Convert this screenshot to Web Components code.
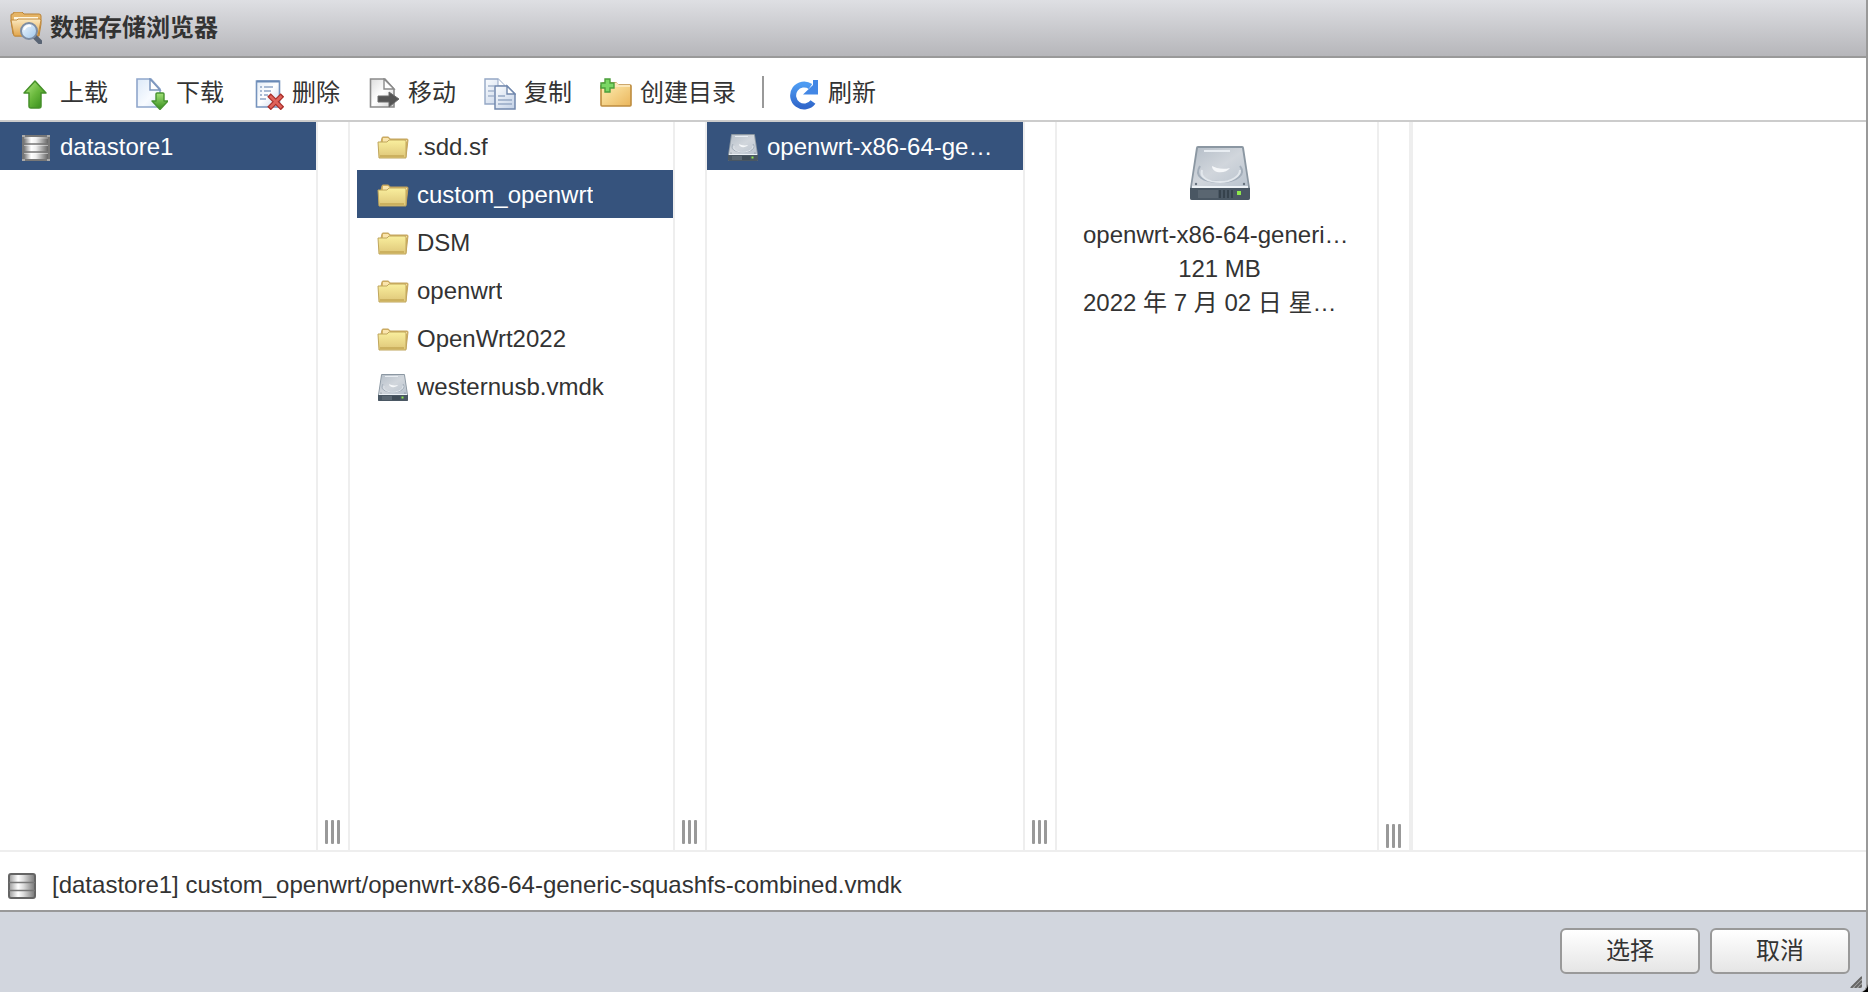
<!DOCTYPE html>
<html lang="zh-CN">
<head>
<meta charset="utf-8">
<title>数据存储浏览器</title>
<style>
  html, body { height: 100%; margin: 0; }
  body { background: #000; color: #333; font: 24px/32px "Liberation Sans", "Noto Sans CJK SC", sans-serif; }
</style>
</head>
<body>
<datastore-dialog>
  <span slot="title">数据存储浏览器</span>
  <tool-button slot="tools" icon="upload">上载</tool-button>
  <tool-button slot="tools" icon="download">下载</tool-button>
  <tool-button slot="tools" icon="delete">删除</tool-button>
  <tool-button slot="tools" icon="move">移动</tool-button>
  <tool-button slot="tools" icon="copy">复制</tool-button>
  <tool-button slot="tools" icon="newfolder">创建目录</tool-button>
  <tool-separator slot="tools"></tool-separator>
  <tool-button slot="tools" icon="refresh">刷新</tool-button>

  <file-column slot="columns">
    <file-item icon="datastore" selected>datastore1</file-item>
  </file-column>
  <file-column slot="columns" indent>
    <file-item icon="folder">.sdd.sf</file-item>
    <file-item icon="folder" selected>custom_openwrt</file-item>
    <file-item icon="folder">DSM</file-item>
    <file-item icon="folder">openwrt</file-item>
    <file-item icon="folder">OpenWrt2022</file-item>
    <file-item icon="disk">westernusb.vmdk</file-item>
  </file-column>
  <file-column slot="columns">
    <file-item icon="disk" selected>openwrt-x86-64-generic-squashfs-combined.vmdk</file-item>
  </file-column>
  <file-column slot="columns" last>
    <file-preview>
      <span slot="name">openwrt-x86-64-generic-squashfs-combined.vmdk</span>
      <span slot="size">121 MB</span>
      <span slot="date">2022 年 7 月 02 日 星期六</span>
    </file-preview>
  </file-column>

  <span slot="path">[datastore1] custom_openwrt/openwrt-x86-64-generic-squashfs-combined.vmdk</span>
  <dialog-button slot="actions">选择</dialog-button>
  <dialog-button slot="actions">取消</dialog-button>
</datastore-dialog>

<script>
const ICONS = {
  browse: `<defs>
      <linearGradient id="a" x2="0" y2="1"><stop stop-color="#fbe9c0"/><stop offset="1" stop-color="#e2a64c"/></linearGradient>
      <linearGradient id="b" x2="1" y2="1"><stop stop-color="#f4faff"/><stop offset="1" stop-color="#9cc4ea"/></linearGradient></defs>
    <path d="M1 9V3q0-1 1-1h1l1-2h8l2 2h15q2 0 2 2v8l-2 12H5L3 22Z" fill="#e5b466" stroke="#b98338"/>
    <path d="M5 4h23v26H5Z" fill="none"/><path d="M4 5h24v4H4Z" fill="#fff7e2"/>
    <path d="M1 8h6l1-1h22l1 1-3 16H4Z" fill="url(#a)" stroke="#c18a3c"/>
    <path d="m24 24 6 6" stroke="#596474" stroke-width="5" stroke-linecap="round"/>
    <circle cx="19" cy="19" r="8" fill="url(#b)" stroke="#7d8da3" stroke-width="2"/>
    <path d="M14 18q2-5 7-4" fill="none" stroke="#fff" stroke-width="2"/>`,
  upload: `<defs><linearGradient id="a" x2="1" y2="1"><stop stop-color="#b4ea86"/><stop offset=".5" stop-color="#69b83c"/><stop offset="1" stop-color="#2c8414"/></linearGradient></defs>
    <path d="M15 3 26 15H21V28q0 2-2 2H11q-2 0-2-2V15H4Z" fill="url(#a)" stroke="#46902a" stroke-width="1.5" stroke-linejoin="round"/>`,
  download: `<defs><linearGradient id="a" x2="1" y2="1"><stop stop-color="#dce9f8"/><stop offset=".6" stop-color="#f8fbff"/><stop offset="1" stop-color="#dce9f8"/></linearGradient>
      <linearGradient id="b" x2="0" y2="1"><stop stop-color="#a2e178"/><stop offset="1" stop-color="#378f1c"/></linearGradient></defs>
    <path d="M1 1H15L24 11V29H1Z" fill="url(#a)" stroke="#8fa6cb" stroke-width="1.6"/>
    <path d="M14 1V12H24Z" fill="#fff" stroke="#7c96bd" stroke-width="1.5"/>
    <path d="M20 16q0-1 1-1h6q1 0 1 1v7h4L24 31.5 16 23h4Z" fill="url(#b)" stroke="#479330" stroke-width="1.4" stroke-linejoin="round"/>`,
  delete: `<defs><linearGradient id="a" x2="1" y2="1"><stop stop-color="#e4edf8"/><stop offset=".5" stop-color="#fff"/><stop offset="1" stop-color="#c4d3ea"/></linearGradient></defs>
    <path d="M4.500 3h23v26h-23Z" fill="url(#a)" stroke="#7593bd" stroke-width="1.6"/><path d="M5 3.500h22" stroke="#6a8ab6" stroke-width="2"/>
    <path d="M8 9h2m2 0h9M8 13h2m2 0h7M8 17h2m2 0h4M8 21h6" stroke="#8fa5c6" stroke-width="1.4"/>
    <path d="m17 17 13.500 13.500M30.500 17 17 30.500" stroke="#a92e2a" stroke-width="5"/>
    <path d="m18 18 11.500 11.500M29.500 18 18 29.500" stroke="#df625a" stroke-width="2.600"/>`,
  move: `<defs><linearGradient id="a" x2="1" y2="1"><stop stop-color="#ddd"/><stop offset=".5" stop-color="#fff"/><stop offset="1" stop-color="#d3d3d3"/></linearGradient></defs>
    <path d="M2.500 1H17L26 11V29H2.500Z" fill="url(#a)" stroke="#8b8b8b" stroke-width="1.6"/>
    <path d="M16 1V11H26Z" fill="#fff" stroke="#8b8b8b" stroke-width="1.4"/>
    <path d="M10 18h11v-4l10 7-10 8v-5H10Z" fill="#555" stroke="#6d6d6d"/>`,
  copy: `<defs><linearGradient id="a" x2="1" y2="1"><stop stop-color="#fbfdff"/><stop offset="1" stop-color="#c3d1e6"/></linearGradient></defs>
    <path d="M1 1H14L21 8V26H1Z" fill="url(#a)" stroke="#94a7c5" stroke-width="1.4"/><path d="M14 1v7h7" fill="#fff" stroke="#94a7c5"/>
    <path d="M4 8h6M4 13h6M4 18h6" stroke="#a5b5cd" stroke-width="1.4"/>
    <path d="M11 8H23L31 16V31H11Z" fill="url(#a)" stroke="#7188ad" stroke-width="1.5"/><path d="M23 8v8h8Z" fill="#fff" stroke="#7188ad" stroke-width="1.4"/>
    <path d="M14 18h7M14 22h14M14 26h14" stroke="#97a9c5" stroke-width="1.4"/>`,
  newfolder: `<defs><linearGradient id="a" x2="1" y2="1"><stop stop-color="#fff0b5"/><stop offset="1" stop-color="#eab55b"/></linearGradient></defs>
    <path d="M1 27V8L3 5H16l2 2H30q1 0 1 1V27q0 1-1 1H2q-1 0-1-1Z" fill="url(#a)" stroke="#bd8c3f" stroke-width="1.6"/>
    <path d="M13 5h4l2 2h11v2H12Z" fill="#fbe7b9"/>
    <path d="M5 1h5v4h4v5h-4v4H5v-4H1V5h4Z" fill="#7bd765" stroke="#4b9f3b" stroke-width="1.4"/>`,
  refresh: `<defs><linearGradient id="a" x2="0" y2="1"><stop stop-color="#4d9bf2"/><stop offset="1" stop-color="#3168cb"/></linearGradient></defs>
    <path d="M22.500 8.500A11 11 0 1 0 25 24" fill="none" stroke="url(#a)" stroke-width="6"/>
    <path d="M15 16.500 25 7V2h5v14.500Z" fill="#4387e5"/>`,
  datastore: `<defs><linearGradient id="a"><stop stop-color="#777"/><stop offset=".3" stop-color="#fff"/><stop offset=".5" stop-color="#eee"/><stop offset="1" stop-color="#666"/></linearGradient></defs>
    <path d="M2 3h28v26H2Z" fill="#777"/><path d="M4 5h24v22H4Z" fill="url(#a)"/>
    <path d="M3 12h26M3 20h26" stroke="#777" stroke-width="1.5"/><path d="M4 6h24M4 13.500h24M4 21.500h24" stroke="#fff" stroke-opacity=".45"/>
    <path d="M2 3h3v2H2Zm25 0h3v2h-3ZM2 27h3v2H2Zm25 0h3v2h-3Z" fill="#aaa"/>`,
  folder: `<defs><linearGradient id="a" x2="0" y2="1"><stop stop-color="#f9ef9e"/><stop offset="1" stop-color="#dec678"/></linearGradient></defs>
    <path d="m4 10 1-4q0-1 1-1h5q1 0 2 2h17q1 0 1 1l-2 17H4Z" fill="#d9b562" stroke="#c3a45f"/>
    <path d="M6 6h5l2 2h17v2H6Z" fill="#fae5ad"/>
    <path d="M1 10h9l2-2h15q2 0 2 1v17H2Z" fill="url(#a)" stroke="#c0a65c"/><path d="M3 23h24v2H3Z" fill="#ccb15f"/>`,
  disk: `<defs><linearGradient id="a" x2="1" y2="1"><stop stop-color="#b5bec8"/><stop offset=".5" stop-color="#d1d6dc"/><stop offset="1" stop-color="#b9c3ce"/></linearGradient></defs>
    <path d="M5 2h22q1 0 1 1l3 20v5q0 1-1 1H2q-1 0-1-1v-5L4 3q0-1 1-1Z" fill="#8b97a2"/>
    <path d="M5 3h22l3 19H2Z" fill="url(#a)"/><path d="M8 4.500h13" stroke="#e8edf2"/>
    <path d="M6 12c-3 5 1 8 10 8s13-4 10-8" fill="none" stroke="#a3aeba"/><path d="M7 14c-1 4 3 6 9 6s10-3 10-6" fill="none" stroke="#e2e7ec"/>
    <path d="M12 12c0 4 7 4 9 1-4 1-7 0-9-1Z" fill="#f5f7f9"/><path d="M2 22h28v1H2Z" fill="#edf2f6"/>
    <circle cx="4" cy="21" r=".6" fill="#68737e"/><circle cx="28" cy="21" r=".6" fill="#68737e"/>
    <path d="M1 23h30v5q0 1-1 1H2q-1 0-1-1Z" fill="#4a5763"/><path d="M5 24h10v4H5Z" fill="#5a6671"/>
    <path d="M16 24v4m2-4v4m2-4v4m2-4v4" stroke="#36424c"/><path d="M24.500 24.500h2v2h-2Z" fill="#8ee84c"/>`,
  path: `<defs><linearGradient id="a"><stop stop-color="#999"/><stop offset=".35" stop-color="#fff"/><stop offset=".55" stop-color="#ddd"/><stop offset="1" stop-color="#777"/></linearGradient></defs>
    <rect x="3" y="3" width="26" height="24" rx="2" fill="url(#a)" stroke="#656565" stroke-width="2"/>
    <path d="M3 11.500h26M3 19.500h26" stroke="#777" stroke-width="1.5"/>`
};

function define(name, markup, setup) {
  const template = document.createElement('template');
  template.innerHTML = markup;
  customElements.define(name, class extends HTMLElement {
    connectedCallback() {
      if (this.shadowRoot) return;
      const content = template.content.cloneNode(true);
      if (setup) setup(this, content);
      this.attachShadow({ mode: 'open' }).append(content);
    }
  });
}
const passIcon = (host, content) =>
  content.querySelector('ui-icon').setAttribute('name', host.getAttribute('icon'));

define('ui-icon', `<style>
  :host { display: block; flex: none; width: 32px; height: 32px; }
  svg { display: block; width: 100%; height: 100%; }
</style><svg viewBox="0 0 32 32" aria-hidden="true"></svg>`,
(host, content) => { content.querySelector('svg').innerHTML = ICONS[host.getAttribute('name')]; });

define('tool-button', `<style>
  :host { display: block; }
  button { display: flex; align-items: center; gap: 8px; height: 40px; padding: 0 12px; border: 0; background: none; color: inherit; font: inherit; white-space: nowrap; }
  span { padding-bottom: 2px; }
</style><button type="button"><ui-icon></ui-icon><span><slot></slot></span></button>`, passIcon);

define('tool-separator', `<style>
  :host { display: block; width: 2px; height: 32px; margin: 0 8px 4px 10px; background: #999; }
</style>`);

define('file-item', `<style>
  :host { display: block; }
  button { display: flex; align-items: center; gap: 8px; width: 100%; height: 48px; padding: 2px 24px 0 20px; border: 0; background: none; color: inherit; font: inherit; text-align: left; }
  :host([selected]) button { background: #36537d; color: #fff; }
  ui-icon { padding-top: 2px; }
  span { min-width: 0; overflow: hidden; text-overflow: ellipsis; white-space: nowrap; }
</style><button type="button"><ui-icon></ui-icon><span><slot></slot></span></button>`, passIcon);

define('file-column', `<style>
  :host { display: flex; flex: none; }
  .list { box-sizing: border-box; width: 316px; }
  :host([indent]) .list { width: 323px; padding-left: 7px; }
  :host([last]) .list { width: 320px; }
  .grip { box-sizing: border-box; display: flex; align-items: flex-end; gap: 3px; width: 34px; padding: 0 0 6px 7px; border: solid #eee; border-width: 0 2px; }
  :host([last]) .grip { width: 36px; padding-bottom: 2px; border-right-width: 4px; }
  i { width: 3px; height: 24px; background: #999; border-radius: 1px; }
</style><div class="list"><slot></slot></div><div class="grip"><i></i><i></i><i></i></div>`);

define('file-preview', `<style>
  :host { display: flex; flex-direction: column; align-items: center; padding: 20px 21px 0 26px; line-height: 34px; }
  ui-icon { width: 64px; height: 64px; margin-bottom: 12px; }
  div { max-width: 100%; overflow: hidden; text-overflow: ellipsis; white-space: nowrap; }
</style><ui-icon name="disk"></ui-icon>
<div><slot name="name"></slot></div><div><slot name="size"></slot></div><div><slot name="date"></slot></div>`);

define('dialog-button', `<style>
  :host { display: block; }
  button { box-sizing: border-box; display: block; width: 140px; height: 46px; padding: 0; border: 2px solid #999; border-radius: 6px; background: linear-gradient(#fff, #e5e5e5); color: inherit; font: inherit; }
</style><button type="button"><slot></slot></button>`);

define('datastore-dialog', `<style>
  :host { box-sizing: border-box; display: flex; flex-direction: column; height: 100%; border-right: 2px solid #999; border-radius: 0 0 8px 0; overflow: hidden; background: #fff; }
  header { display: flex; align-items: center; gap: 8px; height: 56px; padding: 0 10px; border-bottom: 2px solid #999; background: linear-gradient(#dedfe3, #b6b6ba); }
  h1 { margin: 0; font: inherit; font-weight: bold; }
  nav { display: flex; align-items: center; gap: 4px; height: 52px; padding: 10px 8px 0; border-bottom: 2px solid #ccc; }
  main { display: flex; flex: 1; min-height: 0; border-bottom: 2px solid #eee; }
  .path { display: flex; align-items: center; gap: 14px; height: 50px; padding: 8px 6px 0; border-bottom: 2px solid #999; }
  .path ui-icon { padding-top: 4px; }
  footer { position: relative; display: flex; justify-content: flex-end; gap: 10px; height: 64px; padding: 16px 16px 0; background: #d2d6de; }
  .resize { position: absolute; right: 4px; bottom: 4px; width: 12px; height: 12px; }
</style>
<header><ui-icon name="browse"></ui-icon><h1><slot name="title"></slot></h1></header>
<nav><slot name="tools"></slot></nav>
<main><slot name="columns"></slot></main>
<div class="path"><ui-icon name="path"></ui-icon><div><slot name="path"></slot></div></div>
<footer><slot name="actions"></slot>
  <svg class="resize" viewBox="0 0 12 12" aria-hidden="true"><path d="M0 12 12 0V12Z" fill="#aaa"/><path d="M1 12 12 1M5 12l7-7M9 12l3-3" stroke="#666" stroke-width="2"/></svg></footer>`);
</script>
</body>
</html>
